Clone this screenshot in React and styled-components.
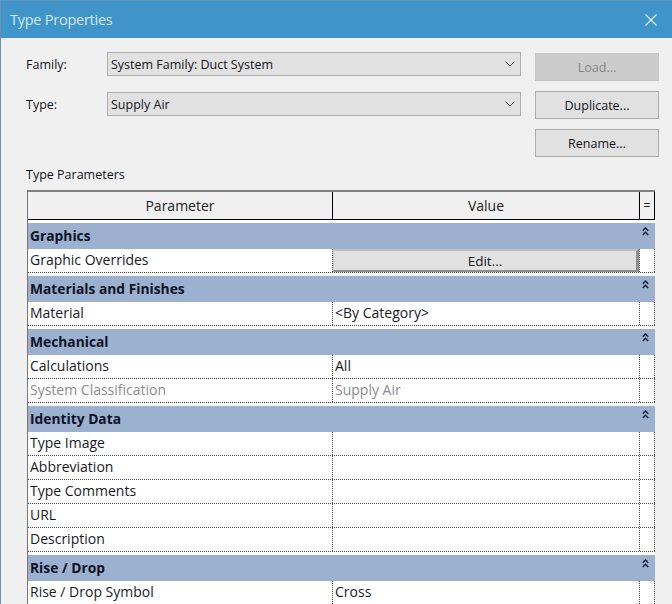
import React from 'react'
import styled, { createGlobalStyle } from 'styled-components'

const GlobalStyle = createGlobalStyle`
    html, body {
        margin: 0;
        padding: 0;
        height: 604px;
        overflow: hidden;
        background: #f0f0f0;
    }
    * {
        box-sizing: border-box;
    }
`

const sections = [
    { name: 'Graphics', rows: [{ label: 'Graphic Overrides', button: 'Edit...' }] },
    { name: 'Materials and Finishes', rows: [{ label: 'Material', value: '<By Category>' }] },
    {
        name: 'Mechanical',
        rows: [
            { label: 'Calculations', value: 'All' },
            { label: 'System Classification', value: 'Supply Air', disabled: true },
        ],
    },
    {
        name: 'Identity Data',
        rows: [
            { label: 'Type Image' },
            { label: 'Abbreviation' },
            { label: 'Type Comments' },
            { label: 'URL' },
            { label: 'Description' },
        ],
    },
    { name: 'Rise / Drop', rows: [{ label: 'Rise / Drop Symbol', value: 'Cross' }] },
]

const CollapseIcon = () => (
    <svg width="7" height="9" viewBox="0 0 7 9" fill="none" stroke="#10182c" strokeWidth="1.3">
        <path d="M0.8 3.8 L3.5 1 L6.2 3.8" />
        <path d="M0.8 8 L3.5 5.2 L6.2 8" />
    </svg>
)

const SelectArrow = () => (
    <svg width="10" height="6" viewBox="0 0 10 6" fill="none" stroke="#555" strokeWidth="1">
        <path d="M0.5 0.5 L5 5 L9.5 0.5" />
    </svg>
)

const CloseIcon = () => (
    <svg width="12" height="12" viewBox="0 0 12 12" fill="none" stroke="#e8f3fa" strokeWidth="1.1">
        <path d="M0.5 0.5 L11.5 11.5 M11.5 0.5 L0.5 11.5" />
    </svg>
)

const App = () => {
    return (
        <Dialog>
            <GlobalStyle />
            <TitleBar>
                <Title>Type Properties</Title>
                <CloseButton><CloseIcon /></CloseButton>
            </TitleBar>
            <Top>
                <Fields>
                    <Field>
                        <FieldLabel>Family:</FieldLabel>
                        <Select>
                            <span>System Family: Duct System</span>
                            <SelectArrow />
                        </Select>
                    </Field>
                    <Field>
                        <FieldLabel>Type:</FieldLabel>
                        <Select>
                            <span>Supply Air</span>
                            <SelectArrow />
                        </Select>
                    </Field>
                </Fields>
                <Buttons>
                    <SideButton disabled>Load...</SideButton>
                    <SideButton>Duplicate...</SideButton>
                    <SideButton>Rename...</SideButton>
                </Buttons>
            </Top>
            <GroupLabel>Type Parameters</GroupLabel>
            <Table>
                <HeaderRow>
                    <HeaderCell>Parameter</HeaderCell>
                    <HeaderCell>Value</HeaderCell>
                    <HeaderCell $narrow>=</HeaderCell>
                </HeaderRow>
                {sections.map((section) => (
                    <Section key={section.name}>
                        <SectionRow>
                            <span>{section.name}</span>
                            <CollapseIcon />
                        </SectionRow>
                        {section.rows.map((row) => (
                            <Row key={row.label} $disabled={row.disabled}>
                                <Cell>{row.label}</Cell>
                                <Cell $value>
                                    {row.button ? <EditButton>{row.button}</EditButton> : row.value}
                                </Cell>
                                <Cell />
                            </Row>
                        ))}
                    </Section>
                ))}
            </Table>
        </Dialog>
    )
}

export default App

const Dialog = styled.div`
    width: 672px;
    height: 604px;
    overflow: hidden;
    background: #f0f0f0;
    border-left: 1px solid #6f93ad;
    font-family: "Open Sans", "Noto Sans", sans-serif;
    color: #14141c;
`

const TitleBar = styled.div`
    height: 38px;
    margin-left: -1px;
    padding: 0 15px 0 10px;
    display: flex;
    align-items: center;
    justify-content: space-between;
    background: #3f94c9;
    border-top: 1px solid #5f93b5;
`

const Title = styled.div`
    font-size: 14.5px;
    letter-spacing: -0.25px;
    color: #d3e7f3;
`

const CloseButton = styled.div`
    display: flex;
`

const Top = styled.div`
    display: flex;
    justify-content: space-between;
    padding: 14px 13px 0 25px;
`

const Fields = styled.div`
    display: flex;
    flex-direction: column;
    gap: 16px;
`

const Field = styled.div`
    display: flex;
    align-items: center;
`

const FieldLabel = styled.div`
    width: 81px;
    font-size: 12.5px;
`

const Select = styled.div`
    width: 414px;
    height: 24px;
    padding: 0 5px 0 3px;
    display: flex;
    align-items: center;
    justify-content: space-between;
    background: #e1e1e1;
    border: 1px solid #adadad;
    font-size: 12.5px;
`

const Buttons = styled.div`
    margin-top: 1px;
    display: flex;
    flex-direction: column;
    gap: 10px;
`

const SideButton = styled.div`
    width: 124px;
    height: 28px;
    display: flex;
    align-items: center;
    justify-content: center;
    font-size: 12.5px;
    background: ${(props) => (props.disabled ? '#cccccc' : '#e1e1e1')};
    border: 1px solid ${(props) => (props.disabled ? '#c6c6c6' : '#adadad')};
    color: ${(props) => (props.disabled ? '#858585' : '#14141c')};
`

const GroupLabel = styled.div`
    margin: 9px 0 0 25px;
    height: 18px;
    line-height: 18px;
    font-size: 12.5px;
`

const Table = styled.div`
    margin: 6px 0 0 26px;
    width: 628px;
    padding-bottom: 4px;
    background: #ffffff;
    border-left: 1px solid #777777;
    border-top: 2px solid #808080;
`

const columns = `
    display: grid;
    grid-template-columns: 305px 307px 15px;
`

const HeaderRow = styled.div`
    ${columns}
    height: 28px;
    background: #f0f0f0;
    border-bottom: 1px solid #000000;
`

const HeaderCell = styled.div`
    display: flex;
    align-items: center;
    justify-content: center;
    font-size: 14px;
    color: #222222;
    border-right: 1px solid #000000;
    ${(props) => props.$narrow && 'font-size: 12px;'}
`

const Section = styled.div`
    margin-top: 3px;
`

const SectionRow = styled.div`
    height: 26px;
    padding: 0 6px 0 2px;
    display: flex;
    align-items: flex-start;
    justify-content: space-between;
    background: #9cb0d0;
    font-size: 13.8px;
    font-weight: 700;
    color: #0c1326;

    span {
        line-height: 25px;
    }

    svg {
        margin-top: 4px;
    }
`

const Row = styled.div`
    ${columns}
    height: 24px;
    color: ${(props) => (props.$disabled ? '#8c8c8c' : '#1a1a1f')};
    border-bottom: 1px dotted #444444;
`

const Cell = styled.div`
    padding-left: 2px;
    line-height: 22px;
    font-size: 14px;
    white-space: nowrap;
    overflow: hidden;
    border-right: 1px dotted #444444;
    ${(props) => props.$value && 'display: flex;'}
`

const EditButton = styled.div`
    flex: 1;
    margin-left: -2px;
    height: 23px;
    text-align: center;
    line-height: 20px;
    font-size: 13.5px;
    background: #e1e1e1;
    border-style: solid;
    border-width: 2px 3px 2px 1px;
    border-color: #c0c0c0 #8f8f8f #8f8f8f #c8c8c8;
`
